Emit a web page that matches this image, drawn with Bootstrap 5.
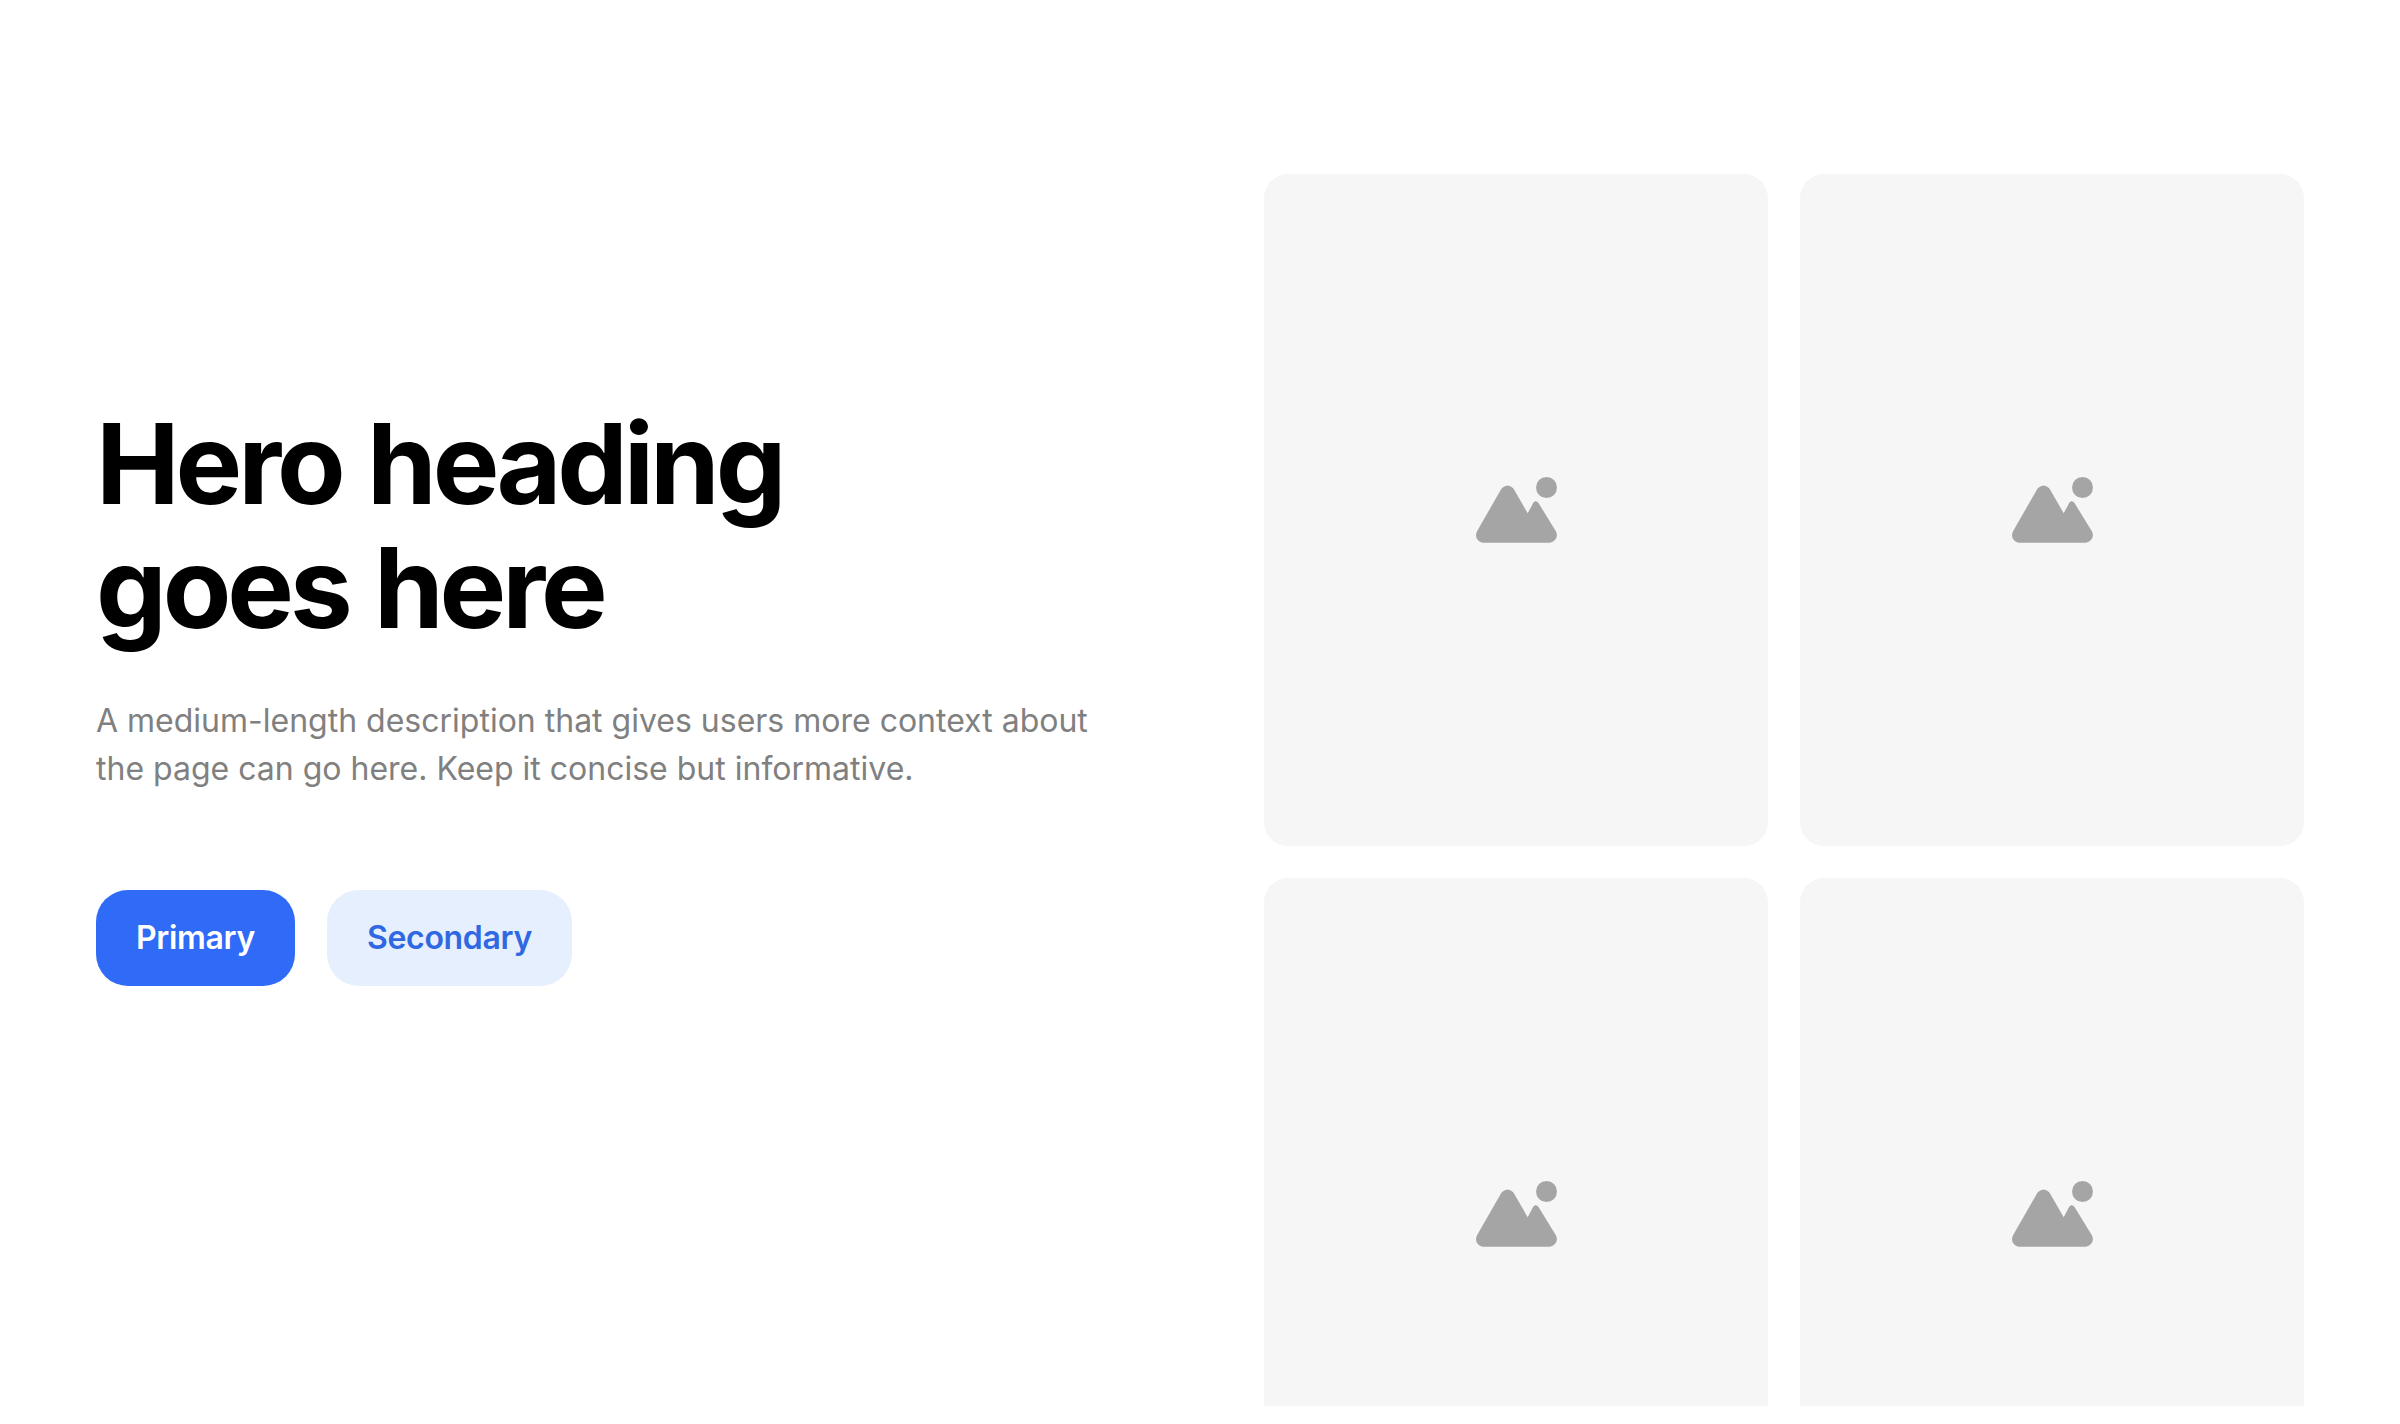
<!DOCTYPE html>
<html lang="en">
<head>
    <meta charset="UTF-8">
    <meta name="viewport" content="width=device-width, initial-scale=1.0">
    <title>Hero</title>
    <link href="https://cdn.jsdelivr.net/npm/bootstrap@5.3.0/dist/css/bootstrap.min.css" rel="stylesheet">
    <style>
        body {
            font-family: Inter, "Liberation Sans", sans-serif;
            background-color: #fff;
        }
        .hero-wrap {
            height: 1406px;
            padding: 0 96px;
            overflow: hidden;
        }
        .hero-copy {
            width: 1168px;
            padding-bottom: 20px;
        }
        .hero-title {
            font-size: 112px;
            font-weight: 700;
            line-height: 124px;
            letter-spacing: -0.0365em;
            word-spacing: 3px;
            color: #000;
            margin-bottom: 48px;
        }
        .hero-text {
            font-size: 32px;
            line-height: 48px;
            color: #808080;
            margin-bottom: 97px;
            max-width: 1020px;
        }
        .hero-actions {
            gap: 32px;
        }
        .hero-btn {
            font-size: 32px;
            font-weight: 600;
            line-height: 48px;
            letter-spacing: -0.01em;
            padding: 24px 40px;
            border: 0;
            border-radius: 32px;
        }
        .hero-btn-main, .hero-btn-main:hover {
            background-color: #2f6bf6;
            color: #fff;
        }
        .hero-btn-soft, .hero-btn-soft:hover {
            background-color: #e5effd;
            color: #2f68e0;
        }
        .photo-grid {
            display: grid;
            grid-template-columns: 504px 504px;
            grid-auto-rows: 672px;
            gap: 32px;
            padding-top: 174px;
        }
        .photo-tile {
            background-color: #f6f6f6;
            border-radius: 24px;
        }
        .photo-tile svg {
            width: 81px;
            height: 66px;
            fill: #a5a5a5;
        }
    </style>
</head>
<body>
    <section class="hero-wrap d-flex">
        <div class="hero-copy d-flex flex-column justify-content-center align-items-start">
            <h1 class="hero-title">Hero heading<br>goes here</h1>
            <p class="hero-text">A medium-length description that gives users more context about the page can go here. Keep it concise but informative.</p>
            <div class="hero-actions d-flex">
                <a href="#" class="btn hero-btn hero-btn-main">Primary</a>
                <a href="#" class="btn hero-btn hero-btn-soft">Secondary</a>
            </div>
        </div>
        <div class="photo-grid">
            <div class="photo-tile d-flex align-items-center justify-content-center">
                <svg viewBox="0 0 81 66"><path d="M25.7 11.3 Q31.7 5.5 37.3 11.3 L51.7 36.3 L57.3 25.7 Q60 22.5 62.7 26.3 L79.7 54 C83 59.5 79 65.7 73 65.7 H7.5 C1.5 65.7 -2 59 1.3 53.7 Z"/><circle cx="70.5" cy="10.5" r="10.5"/></svg>
            </div>
            <div class="photo-tile d-flex align-items-center justify-content-center">
                <svg viewBox="0 0 81 66"><path d="M25.7 11.3 Q31.7 5.5 37.3 11.3 L51.7 36.3 L57.3 25.7 Q60 22.5 62.7 26.3 L79.7 54 C83 59.5 79 65.7 73 65.7 H7.5 C1.5 65.7 -2 59 1.3 53.7 Z"/><circle cx="70.5" cy="10.5" r="10.5"/></svg>
            </div>
            <div class="photo-tile d-flex align-items-center justify-content-center">
                <svg viewBox="0 0 81 66"><path d="M25.7 11.3 Q31.7 5.5 37.3 11.3 L51.7 36.3 L57.3 25.7 Q60 22.5 62.7 26.3 L79.7 54 C83 59.5 79 65.7 73 65.7 H7.5 C1.5 65.7 -2 59 1.3 53.7 Z"/><circle cx="70.5" cy="10.5" r="10.5"/></svg>
            </div>
            <div class="photo-tile d-flex align-items-center justify-content-center">
                <svg viewBox="0 0 81 66"><path d="M25.7 11.3 Q31.7 5.5 37.3 11.3 L51.7 36.3 L57.3 25.7 Q60 22.5 62.7 26.3 L79.7 54 C83 59.5 79 65.7 73 65.7 H7.5 C1.5 65.7 -2 59 1.3 53.7 Z"/><circle cx="70.5" cy="10.5" r="10.5"/></svg>
            </div>
        </div>
    </section>
    <script src="https://cdn.jsdelivr.net/npm/bootstrap@5.3.0/dist/js/bootstrap.bundle.min.js"></script>
</body>
</html>
